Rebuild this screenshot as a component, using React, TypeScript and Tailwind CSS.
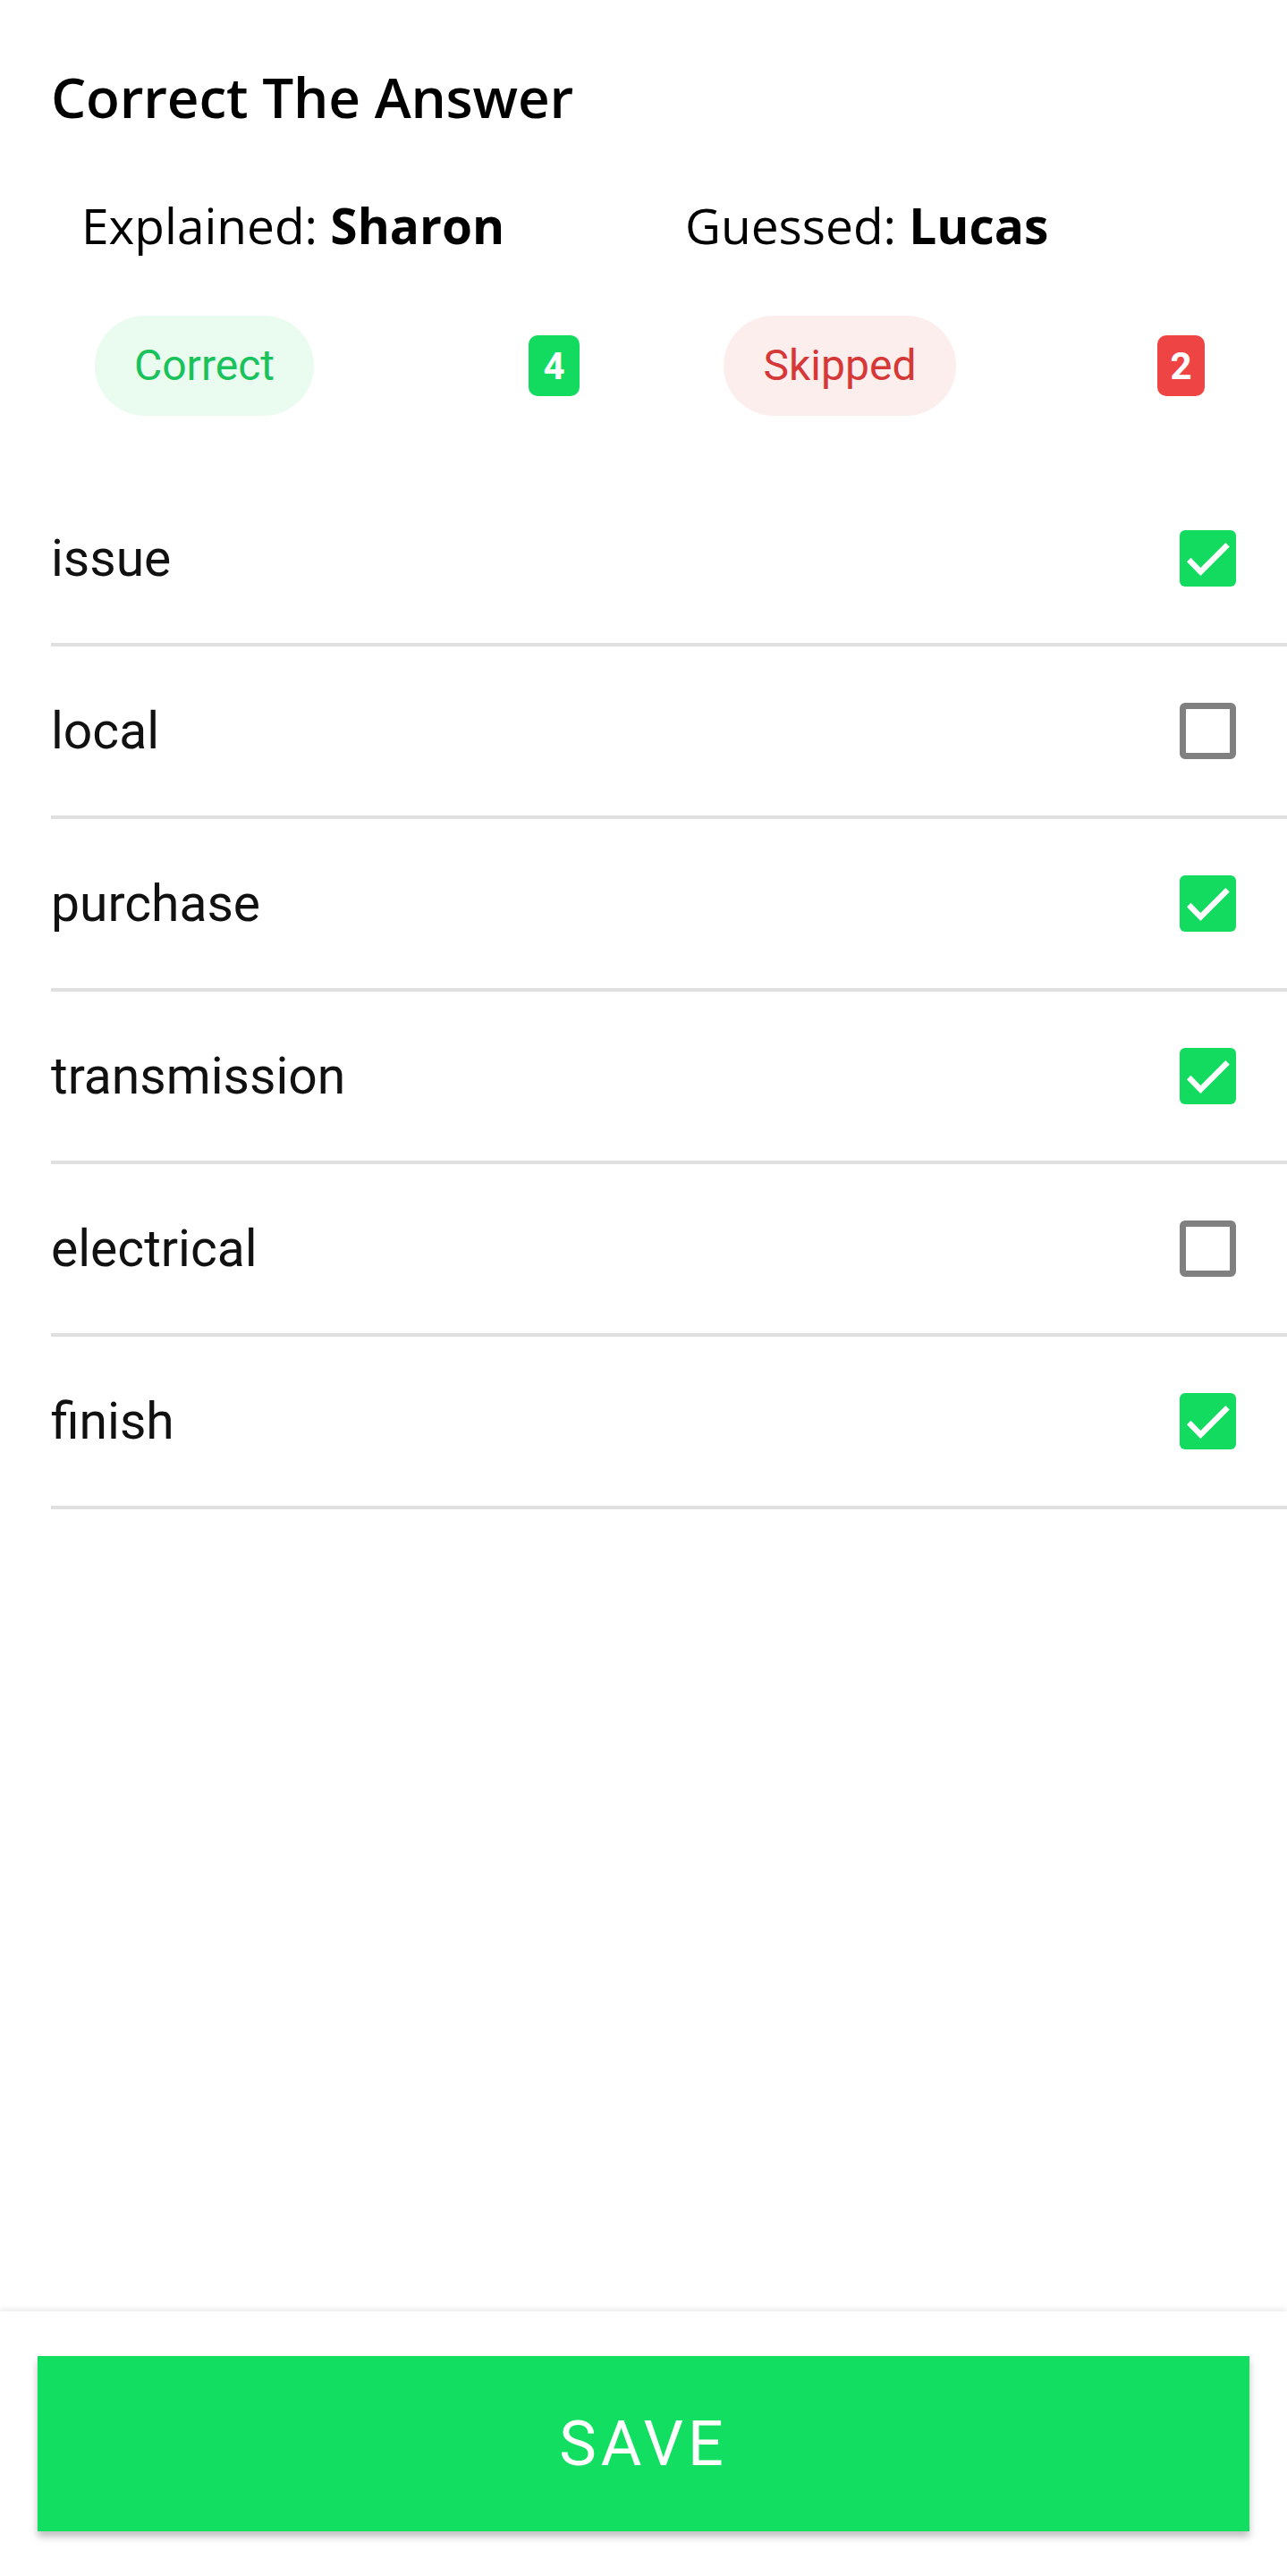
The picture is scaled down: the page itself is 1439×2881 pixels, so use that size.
import React from 'react';

interface Word {
  text: string;
  correct: boolean;
}

const words: Word[] = [
  { text: 'issue', correct: true },
  { text: 'local', correct: false },
  { text: 'purchase', correct: true },
  { text: 'transmission', correct: true },
  { text: 'electrical', correct: false },
  { text: 'finish', correct: true },
];

function CheckBox({ checked }: { checked: boolean }) {
  if (checked) {
    return (
      <div className="flex h-[63px] w-[63px] items-center justify-center rounded-[6px] bg-[#12db60]">
        <svg viewBox="0 0 24 24" className="h-[63px] w-[63px]" fill="none">
          <polyline points="3.9,12.6 8.9,17.7 20.4,6.2" stroke="#fff" strokeWidth="2.4" />
        </svg>
      </div>
    );
  }
  return <div className="h-[63px] w-[63px] rounded-[6px] border-[7px] border-[#808080] bg-white" />;
}

export default function App() {
  const sans = "font-['Open_Sans',_'Liberation_Sans',_sans-serif]";
  const roboto = "font-['Roboto',_'Liberation_Sans',_sans-serif]";

  return (
    <div className="flex min-h-screen flex-col bg-white">
      <main className="flex-1 pl-[57px]">
        {/* Header */}
        <h1 className={`${sans} pt-[68px] text-[62px] font-semibold leading-[80px] tracking-[-0.2px] text-black`}>
          Correct The Answer
        </h1>

        <div className="grid grid-cols-2 pr-[56px]">
          <div>
            <p className={`${sans} mt-[64px] pl-[34px] text-[55px] leading-[80px] text-black`}>
              Explained: <span className="font-bold">Sharon</span>
            </p>
            <div className="mt-[61px] flex items-center justify-between pl-[49px] pr-[72px]">
              <span className={`${roboto} flex h-[112px] w-[245px] items-center justify-center rounded-full bg-[#eafbf0] text-[48px] text-[#19c25a]`}>
                Correct
              </span>
              <span className={`${roboto} flex h-[68px] w-[57px] items-center justify-center rounded-[10px] bg-[#12db60] text-[42px] font-bold text-white`}>
                4
              </span>
            </div>
          </div>
          <div>
            <p className={`${sans} mt-[64px] pl-[46px] text-[55px] leading-[80px] text-black`}>
              Guessed: <span className="font-bold">Lucas</span>
            </p>
            <div className="mt-[61px] flex items-center justify-between pl-[89px] pr-[36px]">
              <span className={`${roboto} flex h-[112px] w-[260px] items-center justify-center rounded-full bg-[#fdeeee] text-[48px] text-[#d63838]`}>
                Skipped
              </span>
              <span className={`${roboto} flex h-[68px] w-[53px] items-center justify-center rounded-[10px] bg-[#ef4444] text-[42px] font-bold text-white`}>
                2
              </span>
            </div>
          </div>
        </div>

        {/* Word list */}
        <ul className="mt-[65px]">
          {words.map((w) => (
            <li
              key={w.text}
              className="flex h-[193px] items-center justify-between border-b-[4px] border-[#e0e0e0] pr-[57px]"
            >
              <span className={`${roboto} text-[57px] text-[#111]`}>{w.text}</span>
              <CheckBox checked={w.correct} />
            </li>
          ))}
        </ul>
      </main>

      {/* Footer */}
      <footer className="h-[296px] bg-white px-[42px] pt-[50px] shadow-[0_-3px_6px_rgba(0,0,0,0.08)]">
        <button className={`${roboto} h-[196px] w-full bg-[#12df62] text-[70px] tracking-[5px] text-white shadow-[0_6px_8px_rgba(0,0,0,0.25)]`}>
          SAVE
        </button>
      </footer>
    </div>
  );
}
